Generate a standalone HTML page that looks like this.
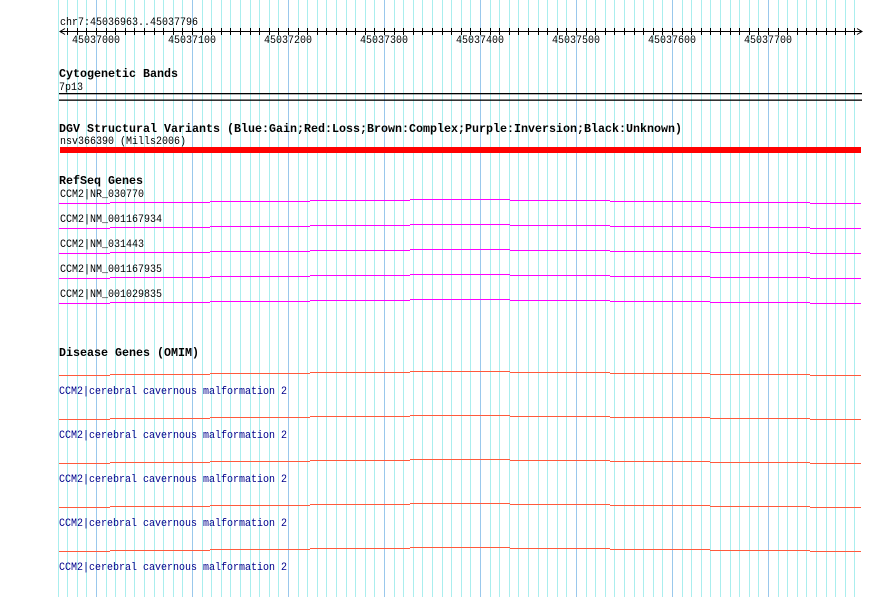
<!DOCTYPE html>
<html><head><meta charset="utf-8"><style>
html,body{margin:0;padding:0;background:#fff;}
svg{display:block;}
text{font-family:"Liberation Mono",monospace;font-size:11px;}
.b{font-weight:bold;font-size:12px;}
</style></head><body>
<svg width="890" height="597" viewBox="0 0 890 597" xmlns="http://www.w3.org/2000/svg">
<g id="grid" shape-rendering="crispEdges"></g>
<g id="ticks" shape-rendering="crispEdges" stroke="#000"></g>
<line x1="60" y1="31.5" x2="862" y2="31.5" stroke="#000" shape-rendering="crispEdges"/>
<path d="M65 28.5 L60 31.5 L65 34.5 M857 28.5 L862 31.5 L857 34.5" stroke="#000" fill="none"/>
<text x="60" y="25" textLength="138" lengthAdjust="spacingAndGlyphs">chr7:45036963..45037796</text>
<g id="tl"></g>
<text class="b" x="59" y="77" textLength="119" lengthAdjust="spacingAndGlyphs">Cytogenetic Bands</text>
<text x="59" y="90" textLength="24" lengthAdjust="spacingAndGlyphs">7p13</text>
<rect x="59" y="93" width="803" height="1.3" fill="#000"/>
<rect x="59" y="99.5" width="803" height="1.3" fill="#000"/>
<text class="b" x="59" y="132" textLength="623" lengthAdjust="spacingAndGlyphs">DGV Structural Variants (Blue:Gain;Red:Loss;Brown:Complex;Purple:Inversion;Black:Unknown)</text>
<text x="60" y="144" textLength="126" lengthAdjust="spacingAndGlyphs">nsv366390 (Mills2006)</text>
<rect x="60" y="147" width="801" height="6" fill="#ff0000"/>
<text class="b" x="59" y="184" textLength="84" lengthAdjust="spacingAndGlyphs">RefSeq Genes</text>
<g id="gl"></g>
<g id="genes" shape-rendering="crispEdges"></g>
<text class="b" x="59" y="356" textLength="140" lengthAdjust="spacingAndGlyphs">Disease Genes (OMIM)</text>
<g id="dl" fill="#00008b"></g>
<g id="dis" shape-rendering="crispEdges"></g>
</svg>
<script>
var ns="http://www.w3.org/2000/svg";
function el(p,t,a){var e=document.createElementNS(ns,t);for(var k in a)e.setAttribute(k,a[k]);document.getElementById(p).appendChild(e);return e;}
for(var k=-44;k<=39;k++){
  var x=Math.round(480+9.6*k);
  var major=(k%10===0);
  el("grid","rect",{x:x,y:0,width:1,height:597,fill:major?"#99c8ec":"#aaeeee"});
  if(x>62&&x<858) el("ticks","line",{x1:x+0.5,y1:28,x2:x+0.5,y2:35});
}
for(var i=0;i<8;i++){
  var t=el("tl","text",{x:480+96*(i-4)-24,y:43,textLength:48,lengthAdjust:"spacingAndGlyphs"});t.textContent=String(45037000+i*100);
}
var names=["CCM2|NR_030770","CCM2|NM_001167934","CCM2|NM_031443","CCM2|NM_001167935","CCM2|NM_001029835"];
for(var r=0;r<5;r++){var t=el("gl","text",{x:60,y:197+25*r,textLength:names[r].length*6,lengthAdjust:"spacingAndGlyphs"});t.textContent=names[r];}
var dn="CCM2|cerebral cavernous malformation 2";
for(var r=0;r<5;r++){var t=el("dl","text",{x:59,y:394+44*r,textLength:dn.length*6,lengthAdjust:"spacingAndGlyphs"});t.textContent=dn;}
var segs=[59,110,210,310,410,510,610,710,810,861],off=[4,3,2,1,0,1,2,3,4];
function row(g,base,col){
  for(var s=0;s<9;s++){
    el(g,"rect",{x:segs[s],y:base+off[s],width:segs[s+1]-segs[s],height:1,fill:col});
  }
}
for(var r=0;r<5;r++) row("genes",199+25*r,"#ff00ff");
for(var r=0;r<5;r++) row("dis",371+44*r,"#ff5a3c");
</script>
</body></html>
